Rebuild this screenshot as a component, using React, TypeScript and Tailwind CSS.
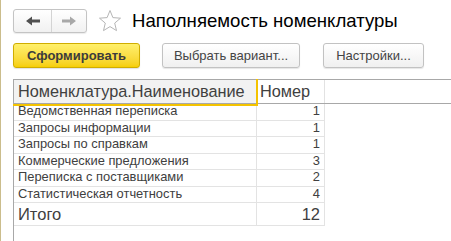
import React from 'react';

const rows: { name: string; num: number }[] = [
  { name: 'Ведомственная переписка', num: 1 },
  { name: 'Запросы информации', num: 1 },
  { name: 'Запросы по справкам', num: 1 },
  { name: 'Коммерческие предложения', num: 3 },
  { name: 'Переписка с поставщиками', num: 2 },
  { name: 'Статистическая отчетность', num: 4 },
];

const Arrow: React.FC<{ dir: 'left' | 'right'; color: string }> = ({ dir, color }) => (
  <svg width="14" height="10" viewBox="0 0 14 10" style={{ transform: dir === 'right' ? 'scaleX(-1)' : undefined }}>
    <path d="M0 5 L6 0.5 L6 3.5 L14 3.5 L14 6.5 L6 6.5 L6 9.5 Z" fill={color} />
  </svg>
);

const Star: React.FC = () => (
  <svg width="24" height="24" viewBox="0 0 24 24">
    <path
      d="M12 1.5 L14.9 8.6 L22.5 9.2 L16.7 14.1 L18.5 21.6 L12 17.6 L5.5 21.6 L7.3 14.1 L1.5 9.2 L9.1 8.6 Z"
      fill="none"
      stroke="#b5b5b5"
      strokeWidth="1"
      strokeLinejoin="miter"
    />
  </svg>
);

const App: React.FC = () => {
  const total = rows.reduce((s, r) => s + r.num, 0);

  return (
    <div
      className="w-[451px] h-[241px] overflow-hidden bg-white border-l border-[#cbbd8c] pl-[12px]"
      style={{ fontFamily: '"Liberation Sans", Arial, sans-serif' }}
    >
      {/* top bar */}
      <div className="flex items-center h-[24px] mt-[9px]">
        <div className="flex h-[24px] w-[74px] rounded-[3px] border border-[#c4c4c4] bg-gradient-to-b from-white to-[#f1f1f1] shadow-[0_1px_1px_rgba(0,0,0,0.08)]">
          <div className="flex w-[38px] items-center justify-center border-r border-[#d4d4d4]">
            <Arrow dir="left" color="#505050" />
          </div>
          <div className="flex flex-1 items-center justify-center">
            <Arrow dir="right" color="#a8a8a8" />
          </div>
        </div>
        <div className="ml-[11px] flex items-center">
          <Star />
        </div>
        <div className="ml-[10px] text-[18.6px] leading-none text-black">Наполняемость номенклатуры</div>
      </div>

      {/* command bar */}
      <div className="flex items-center mt-[10px] h-[25px]">
        <button className="h-[25px] w-[127px] rounded-[3px] border border-[#d0ad00] bg-gradient-to-b from-[#fff06a] to-[#f6cf00] text-[13px] font-bold text-[#3c3c3c] shadow-[0_1px_1px_rgba(0,0,0,0.12)]">
          Сформировать
        </button>
        <button className="ml-[22px] h-[25px] w-[138px] rounded-[3px] border border-[#c2c2c2] bg-gradient-to-b from-white to-[#f0f0f0] text-[13px] text-[#444] shadow-[0_1px_1px_rgba(0,0,0,0.1)]">
          Выбрать вариант...
        </button>
        <button className="ml-[23px] h-[25px] w-[101px] rounded-[3px] border border-[#c2c2c2] bg-gradient-to-b from-white to-[#f0f0f0] text-[13px] text-[#444] shadow-[0_1px_1px_rgba(0,0,0,0.1)]">
          Настройки...
        </button>
      </div>

      {/* report table */}
      <div className="mt-[11px] h-[200px] border-l border-[#a8a8a8] text-[#404040]">
        <div className="relative flex h-[25px] border-t border-b border-[#a8a8a8]">
          <div className="flex w-[243px] items-center bg-[#f2f2f2] pl-[4px] text-[16.3px]">
            Номенклатура.Наименование
          </div>
          <div className="flex w-[68px] items-center border-r border-[#e2e2e2] pl-[3px] text-[16.3px]">
            Номер
          </div>
          <div className="pointer-events-none absolute left-[-1px] top-[-1px] h-[27px] w-[245px] border-r-2 border-b-2 border-[#f4c300]" />
        </div>

        {rows.map((r) => (
          <div key={r.name} className="flex h-[16.5px] text-[12.9px] leading-none">
            <div className="flex w-[243px] items-center border-b border-r border-[#e3e3e3] pl-[4px]">{r.name}</div>
            <div className="flex w-[68px] items-center justify-end border-b border-r border-[#e3e3e3] pr-[4px]">
              {r.num}
            </div>
          </div>
        ))}

        <div className="flex h-[23px] text-[16.5px] leading-none">
          <div className="flex w-[243px] items-center border-b border-r border-[#e3e3e3] pl-[4px]">Итого</div>
          <div className="flex w-[68px] items-center justify-end border-b border-r border-[#e3e3e3] pr-[4px]">
            {total}
          </div>
        </div>
      </div>
    </div>
  );
};

export default App;
